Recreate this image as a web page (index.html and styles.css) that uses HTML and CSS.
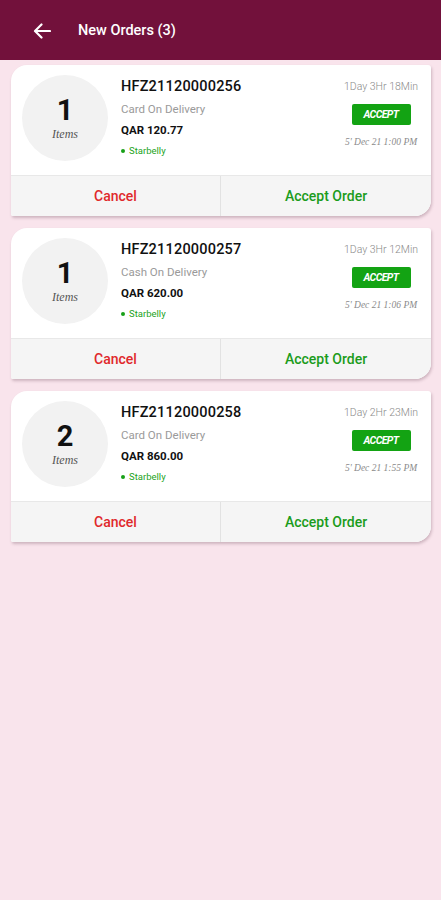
FILE: index.html
```html
<!DOCTYPE html>
<html>
<head>
<meta charset="utf-8">
<link rel="stylesheet" href="styles.css">
</head>
<body>
<header class="appbar">
  <svg class="back" width="18" height="16" viewBox="0 0 18 16"><path d="M17 8H2.5M8.5 1.5L2 8l6.5 6.5" fill="none" stroke="#fff" stroke-width="2.2" stroke-linecap="round" stroke-linejoin="round"/></svg>
  <span class="title">New Orders (3)</span>
</header>
<main class="list">
  <section class="card">
    <div class="top">
      <div class="count"><span class="num">1</span><span class="items">Items</span></div>
      <div class="info">
        <div class="oid">HFZ21120000256</div>
        <div class="pay">Card On Delivery</div>
        <div class="amt">QAR 120.77</div>
        <div class="store"><span class="dot"></span>Starbelly</div>
      </div>
      <div class="side">
        <div class="elapsed">1Day 3Hr 18Min</div>
        <div class="accept">ACCEPT</div>
        <div class="date">5' Dec 21 1:00 PM</div>
      </div>
    </div>
    <div class="actions"><div class="btn cancel">Cancel</div><div class="btn ok">Accept Order</div></div>
  </section>
  <section class="card">
    <div class="top">
      <div class="count"><span class="num">1</span><span class="items">Items</span></div>
      <div class="info">
        <div class="oid">HFZ21120000257</div>
        <div class="pay">Cash On Delivery</div>
        <div class="amt">QAR 620.00</div>
        <div class="store"><span class="dot"></span>Starbelly</div>
      </div>
      <div class="side">
        <div class="elapsed">1Day 3Hr 12Min</div>
        <div class="accept">ACCEPT</div>
        <div class="date">5' Dec 21 1:06 PM</div>
      </div>
    </div>
    <div class="actions"><div class="btn cancel">Cancel</div><div class="btn ok">Accept Order</div></div>
  </section>
  <section class="card">
    <div class="top">
      <div class="count"><span class="num">2</span><span class="items">Items</span></div>
      <div class="info">
        <div class="oid">HFZ21120000258</div>
        <div class="pay">Card On Delivery</div>
        <div class="amt">QAR 860.00</div>
        <div class="store"><span class="dot"></span>Starbelly</div>
      </div>
      <div class="side">
        <div class="elapsed">1Day 2Hr 23Min</div>
        <div class="accept">ACCEPT</div>
        <div class="date">5' Dec 21 1:55 PM</div>
      </div>
    </div>
    <div class="actions"><div class="btn cancel">Cancel</div><div class="btn ok">Accept Order</div></div>
  </section>
</main>
</body>
</html>
```
FILE: styles.css
```css
* { box-sizing: border-box; }
html, body { margin: 0; padding: 0; }
body {
  width: 441px;
  height: 900px;
  background: #f9e4ec;
  font-family: Roboto, "Liberation Sans", sans-serif;
  color: #111;
}
.appbar {
  height: 60px;
  background: #72113b;
  display: flex;
  align-items: center;
  padding-left: 33px;
}
.back { display: block; margin-top: 1px; }
.title {
  color: #fff;
  font-size: 14.5px;
  font-weight: 500;
  margin-left: 27px;
}
.list {
  padding: 5px 10px 0 11px;
  display: flex;
  flex-direction: column;
  gap: 12px;
}
.card {
  background: #fff;
  border-radius: 16px 3px 16px 2px;
  box-shadow: 1px 2px 3px rgba(80, 40, 60, 0.25);
  overflow: hidden;
}
.top {
  height: 110px;
  display: flex;
  padding: 10px 10px 0 11px;
}
.count {
  width: 86px;
  height: 86px;
  border-radius: 50%;
  background: #f2f2f2;
  display: flex;
  flex-direction: column;
  align-items: center;
  justify-content: center;
  flex: none;
}
.num {
  font-size: 29px;
  font-weight: 700;
  line-height: 30px;
  margin-top: 0;
}
.items {
  font-family: "Liberation Serif", serif;
  font-style: italic;
  font-size: 12px;
  color: #555;
  margin-top: 2px;
}
.info {
  flex: 1;
  margin-left: 13px;
  padding-top: 3px;
}
.oid {
  font-size: 14.5px;
  font-weight: 500;
  letter-spacing: 0.2px;
  line-height: 18px;
}
.pay {
  font-size: 11.5px;
  color: #9a9a9a;
  margin-top: 6px;
  line-height: 14px;
}
.amt {
  font-size: 11.5px;
  font-weight: 700;
  margin-top: 7px;
  line-height: 15px;
}
.store {
  font-size: 9.5px;
  color: #22a322;
  margin-top: 7px;
  line-height: 12px;
  display: flex;
  align-items: center;
}
.dot {
  width: 4px;
  height: 4px;
  border-radius: 50%;
  background: #17a017;
  margin-right: 4px;
}
.side {
  width: 80px;
  display: flex;
  flex-direction: column;
  align-items: center;
  padding-top: 6px;
}
.elapsed {
  font-size: 10.5px;
  font-weight: 300;
  color: #8a8a8a;
  line-height: 12px;
  white-space: nowrap;
}
.accept {
  margin-top: 11px;
  width: 59px;
  height: 21px;
  background: #13a313;
  border-radius: 2px;
  color: #fff;
  font-style: italic;
  font-weight: 700;
  font-size: 10.5px;
  letter-spacing: -0.6px;
  display: flex;
  align-items: center;
  justify-content: center;
}
.date {
  margin-top: 12px;
  font-family: "Liberation Serif", serif;
  font-style: italic;
  font-size: 9.5px;
  color: #8a8a8a;
  white-space: nowrap;
}
.actions {
  height: 41px;
  display: flex;
  background: #f5f5f5;
  border-top: 1px solid #e8e8e8;
}
.btn {
  flex: 1;
  display: flex;
  align-items: center;
  justify-content: center;
  font-size: 14px;
  font-weight: 500;
}
.cancel { color: #e0282b; border-right: 1px solid #e2e2e2; flex: 0 0 210px; }
.ok { color: #1b9c1b; }
```
